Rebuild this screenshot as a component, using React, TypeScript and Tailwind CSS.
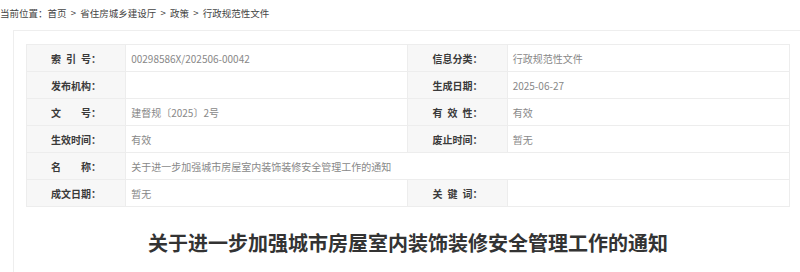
const rows: { l1: string; v1: string; l2?: string; v2?: string; span?: boolean }[] = [
  { l1: "索\u2002引\u2002号：", v1: "00298586X/202506-00042", l2: "信息分类：", v2: "行政规范性文件" },
  { l1: "发布机构：", v1: "", l2: "生成日期：", v2: "2025-06-27" },
  { l1: "文　　号：", v1: "建督规〔2025〕2号", l2: "有\u2002效\u2002性：", v2: "有效" },
  { l1: "生效时间：", v1: "有效", l2: "废止时间：", v2: "暂无" },
  { l1: "名　　称：", v1: "关于进一步加强城市房屋室内装饰装修安全管理工作的通知", span: true },
  { l1: "成文日期：", v1: "暂无", l2: "关\u2002键\u2002词：", v2: "" },
];

const labelCls = "w-[13%] h-[27px] bg-[#f7f7f7] border border-[#ededed] text-center font-bold text-[#3a3a3a]";
const valueCls = "h-[27px] border border-[#ededed] pl-[5px] text-left text-[#888]";

export default function App() {
  return (
    <div
      className="w-[800px] h-[272px] overflow-hidden bg-white"
      style={{ fontFamily: '"Noto Sans CJK SC", "Noto Sans", sans-serif' }}
    >
      <div className="h-[26px] flex items-center text-[9.5px] text-[#444]">
        当前位置：首页&nbsp; &gt;&nbsp; 省住房城乡建设厅&nbsp; &gt;&nbsp; 政策&nbsp; &gt;&nbsp; 行政规范性文件
      </div>
      <div className="ml-[13px] mt-[4px] w-[790px] h-[260px] border border-[#eeeeee] pt-[13px] px-[12px]">
        <table className="w-[764px] table-fixed border-collapse text-[10px]">
          <tbody>
            {rows.map((r, i) => (
              <tr key={i}>
                <td className={labelCls}>{r.l1}</td>
                {r.span ? (
                  <td className={valueCls} colSpan={3}>
                    {r.v1}
                  </td>
                ) : (
                  <>
                    <td className={`w-[37%] ${valueCls}`}>{r.v1}</td>
                    <td className={labelCls}>{r.l2}</td>
                    <td className={`w-[37%] ${valueCls}`}>{r.v2}</td>
                  </>
                )}
              </tr>
            ))}
          </tbody>
        </table>
        <h1 className="mt-[21px] text-center text-[20px] leading-[30px] font-bold text-[#333]">
          关于进一步加强城市房屋室内装饰装修安全管理工作的通知
        </h1>
      </div>
    </div>
  );
}
